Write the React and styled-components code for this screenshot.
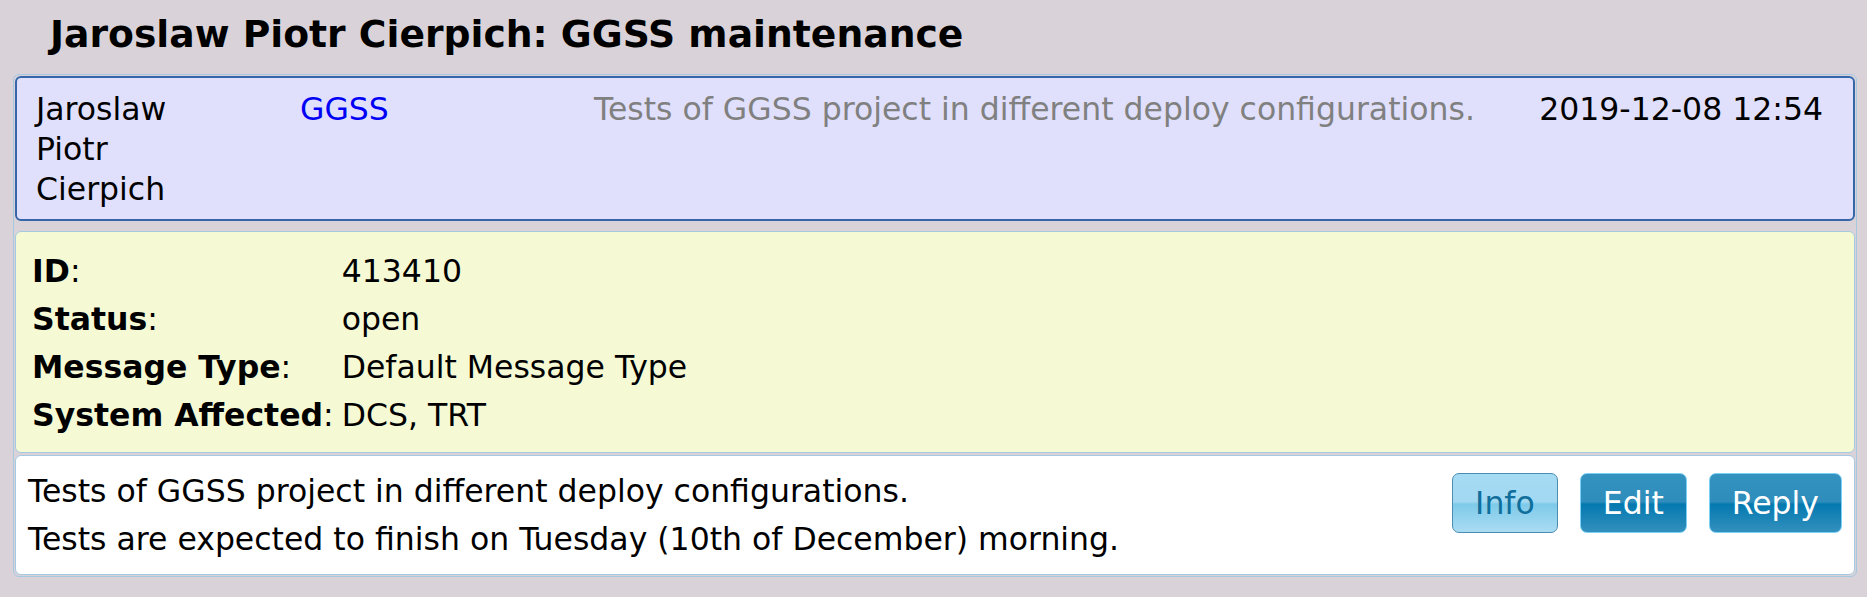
import React from 'react';
import styled, { createGlobalStyle } from 'styled-components';

const GlobalStyle = createGlobalStyle`
  html, body {
    margin: 0;
    padding: 0;
    background: #d9d3d9;
  }
  body {
    font-family: "DejaVu Sans", Verdana, sans-serif;
    font-size: 31.5px;
    color: #000;
  }
`;

const Page = styled.div`
  padding: 12px 10px 0 13px;
  height: 597px;
  box-sizing: border-box;
  overflow: hidden;
`;

const Title = styled.h1`
  margin: 0 0 18px 37px;
  font-size: 37.7px;
  font-weight: bold;
  line-height: normal;
`;

const Entry = styled.div`
  width: 1844px;
  box-sizing: border-box;
  border: 1px solid #a6c9e2;
  border-radius: 6px;
  padding: 1px;
`;

const Header = styled.div`
  display: grid;
  grid-template-columns: 264px 294px 1fr auto;
  padding: 11px 30px 10px 19px;
  background: #e0e0fd;
  border: 2px solid #3466a9;
  border-radius: 6px;
  line-height: 40px;
`;

const Author = styled.div`
  max-width: 190px;
`;

const Project = styled.a`
  color: #0000f5;
  text-decoration: none;
`;

const Summary = styled.div`
  color: #808080;
`;

const Details = styled.div`
  display: grid;
  grid-template-columns: auto 1fr;
  column-gap: 8px;
  margin-top: 10px;
  padding: 15px 16px 13px;
  background: #f5fad5;
  border: 1px solid #a6c9e2;
  border-radius: 6px;
  line-height: 48px;

  b {
    font-weight: bold;
  }
`;

const Body = styled.div`
  display: flex;
  justify-content: space-between;
  align-items: flex-start;
  margin-top: 2px;
  padding: 11px 12px 11px 12px;
  background: #fff;
  border: 1px solid #a6c9e2;
  border-radius: 6px;
  line-height: 48px;
`;

const Actions = styled.div`
  display: flex;
  gap: 22px;
  margin-top: 6px;
`;

const Button = styled.button`
  height: 60px;
  padding: 0 22px;
  font-family: inherit;
  font-size: 31.5px;
  line-height: 36px;
  border-radius: 7px;
  cursor: pointer;
  border: 1px solid ${p => (p.$light ? '#4b8db0' : '#7ccff5')};
  color: ${p => (p.$light ? '#0f6e9b' : '#fff')};
  background: ${p =>
    p.$light
      ? 'linear-gradient(#a5dbf3 0%, #a2d8f1 48%, #7ecae9 52%, #aadcf3 100%)'
      : 'linear-gradient(#3492bf 0%, #2e8dbb 48%, #0479b0 52%, #3390bd 100%)'};
`;

const fields = [
  ['ID', '413410'],
  ['Status', 'open'],
  ['Message Type', 'Default Message Type'],
  ['System Affected', 'DCS, TRT'],
];

const App = () => (
  <Page>
    <GlobalStyle />
    <Title>Jaroslaw Piotr Cierpich: GGSS maintenance</Title>
    <Entry>
      <Header>
        <Author>Jaroslaw Piotr Cierpich</Author>
        <div>
          <Project href="#">GGSS</Project>
        </div>
        <Summary>Tests of GGSS project in different deploy configurations.</Summary>
        <div>2019-12-08 12:54</div>
      </Header>
      <Details>
        {fields.map(([label, value]) => (
          <React.Fragment key={label}>
            <div>
              <b>{label}</b>:
            </div>
            <div>{value}</div>
          </React.Fragment>
        ))}
      </Details>
      <Body>
        <div>
          Tests of GGSS project in different deploy configurations.
          <br />
          Tests are expected to finish on Tuesday (10th of December) morning.
        </div>
        <Actions>
          <Button $light>Info</Button>
          <Button>Edit</Button>
          <Button>Reply</Button>
        </Actions>
      </Body>
    </Entry>
  </Page>
);

export default App;
